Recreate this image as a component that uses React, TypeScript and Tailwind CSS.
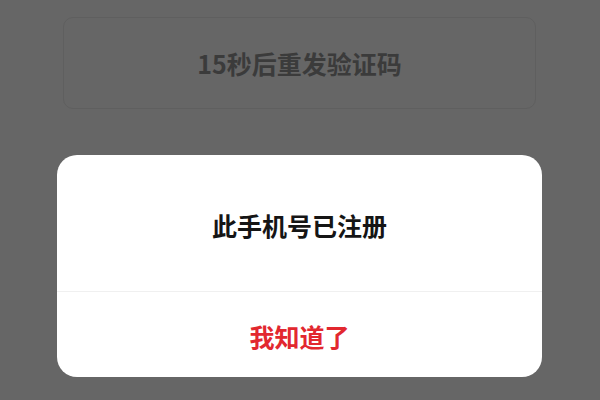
export default function App() {
  return (
    <div className="h-[400px] w-[600px] overflow-hidden bg-[#666666] font-['Noto_Sans_CJK_SC',sans-serif]">
      <div className="pt-[17px] pl-[63px]">
        <div className="flex h-[92px] w-[473px] items-center justify-center rounded-[10px] border border-[#5f5f5f]">
          <span className="pt-[1px] text-[25px] font-bold text-[#3b3b3b]">15秒后重发验证码</span>
        </div>
      </div>

      <div className="pt-[46px] pl-[57px]">
        <div className="w-[485px] overflow-hidden rounded-[20px] bg-white">
          <div className="flex h-[137px] items-center justify-center border-b border-[#f0f0f0] pt-[6px]">
            <span className="text-[25px] font-semibold text-[#151515]">此手机号已注册</span>
          </div>
          <div className="flex h-[85px] items-center justify-center pt-[4px]">
            <span className="text-[25px] font-bold text-[#e2282f]">我知道了</span>
          </div>
        </div>
      </div>
    </div>
  )
}
